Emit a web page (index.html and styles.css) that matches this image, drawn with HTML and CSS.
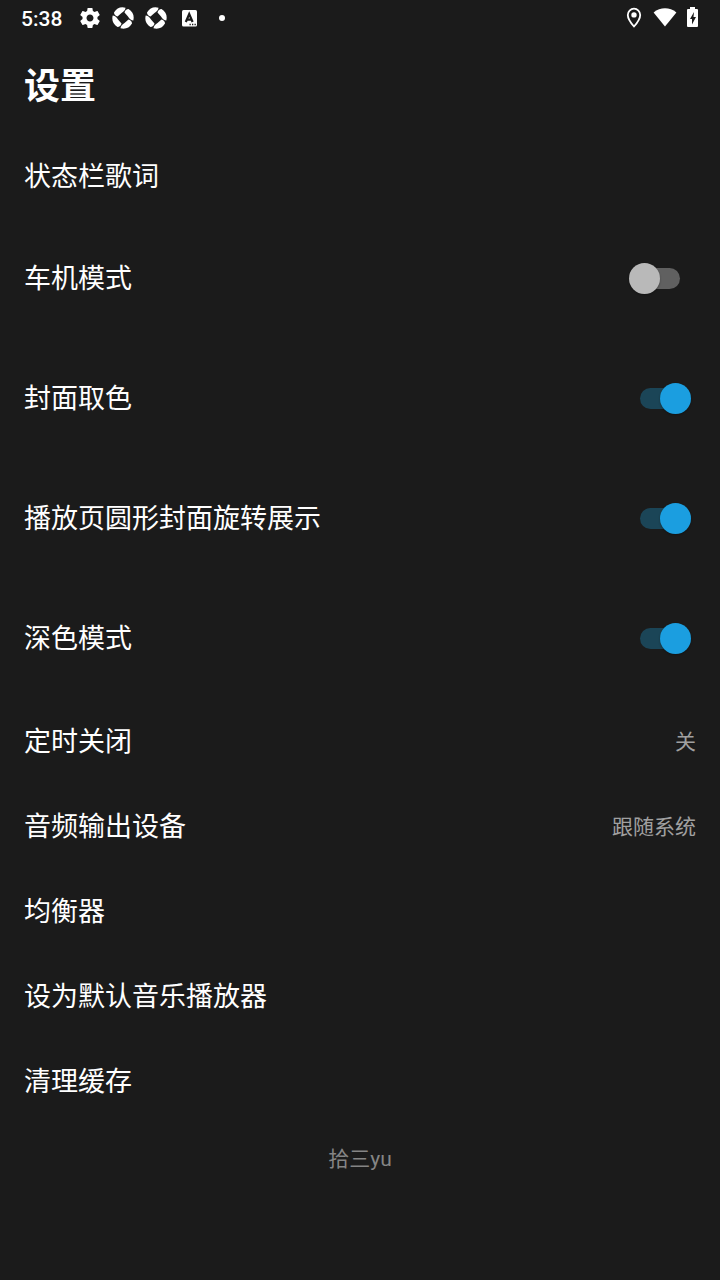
FILE: index.html
```html
<!DOCTYPE html>
<html lang="zh-CN">
<head>
  <meta charset="UTF-8">
  <meta name="viewport" content="width=device-width, initial-scale=1.0">
  <title>设置</title>
  <link rel="stylesheet" href="styles.css">
</head>
<body>

  <!-- Status bar -->
  <div class="status-bar">
    <span class="time">5:38</span>
    <div class="notifications">
      <svg width="24" height="24" viewBox="0 0 24 24" fill="#fff" aria-hidden="true">
        <path d="M19.43 12.98c.04-.32.07-.64.07-.98s-.03-.66-.07-.98l2.11-1.65c.19-.15.24-.42.12-.64l-2-3.46c-.12-.22-.39-.3-.61-.22l-2.49 1c-.52-.4-1.08-.73-1.69-.98l-.38-2.65C14.46 2.18 14.25 2 14 2h-4c-.25 0-.46.18-.49.42l-.38 2.65c-.61.25-1.17.59-1.69.98l-2.49-1c-.23-.09-.49 0-.61.22l-2 3.46c-.13.22-.07.49.12.64l2.11 1.65c-.04.32-.07.65-.07.98s.03.66.07.98l-2.11 1.65c-.19.15-.24.42-.12.64l2 3.46c.12.22.39.3.61.22l2.49-1c.52.4 1.08.73 1.69.98l.38 2.65c.03.24.24.42.49.42h4c.25 0 .46-.18.49-.42l.38-2.65c.61-.25 1.17-.59 1.69-.98l2.49 1c.23.09.49 0 .61-.22l2-3.46c.12-.22.07-.49-.12-.64l-2.11-1.65zM12 15.5c-1.93 0-3.5-1.57-3.5-3.5s1.57-3.5 3.5-3.5 3.5 1.57 3.5 3.5-1.57 3.5-3.5 3.5z"/>
      </svg>
      <svg width="24" height="24" viewBox="-12 -12 24 24" fill="#fff" aria-hidden="true">
        <g id="swirl">
          <path id="blade" d="M-9-5.500A10.600 10.600 0 0 1 2.500-10.300C2.500-8.500 1-6.500-1.500-5L-5.500-1.500C-7.500-2-9-3.500-9-5.500z"/>
          <use href="#blade" transform="rotate(90)"/>
          <use href="#blade" transform="rotate(180)"/>
          <use href="#blade" transform="rotate(270)"/>
        </g>
      </svg>
      <svg width="24" height="24" viewBox="-12 -12 24 24" fill="#fff" aria-hidden="true">
        <use href="#swirl"/>
      </svg>
      <svg width="24" height="24" viewBox="0 0 24 24" aria-hidden="true">
        <rect x="5" y="4" width="15" height="16.500" rx="1.500" fill="#fff"/>
        <path d="M8.800 16L12.200 8L15.600 16M10 13.600H14.500" fill="none" stroke="#1b1b1b" stroke-width="2.200"/>
        <path d="M12.500 18.500h1.300M15 18.500h1.300M17.500 18.500h1.300" stroke="#1b1b1b" stroke-width="1.300"/>
      </svg>
      <svg width="24" height="24" viewBox="0 0 24 24" fill="#fff" aria-hidden="true">
        <circle cx="12" cy="12" r="3"/>
      </svg>
    </div>
    <div class="system-icons">
      <svg width="24" height="24" viewBox="0 0 24 24" aria-hidden="true">
        <path d="M13 20.500C9.500 16.500 6.800 12.500 6.800 8.900a6.200 6.200 0 0 1 12.400 0C19.200 12.500 16.500 16.500 13 20.500z" fill="none" stroke="#fff" stroke-width="1.800"/>
        <circle cx="13" cy="8.900" r="2.700" fill="#fff"/>
      </svg>
      <svg width="24" height="24" viewBox="0 0 24 24" fill="#fff" aria-hidden="true">
        <path d="M12 20.500L.6 6.500C4 3.600 8 2.300 12 2.300s8 1.300 11.400 4.200z"/>
      </svg>
      <svg width="12" height="24" viewBox="0 0 12 24" aria-hidden="true">
        <path d="M3 1h5v2h2q1 0 1 1v16q0 1-1 1H1q-1 0-1-1V4q0-1 1-1h2z" fill="#fff"/>
        <path d="M7 6L3 13h2v5.500L9 11H6.500z" fill="#1b1b1b"/>
      </svg>
    </div>
  </div>

  <header>
    <h1>设置</h1>
  </header>

  <!-- Settings list -->
  <main>
    <button type="button" class="item">状态栏歌词</button>

    <div class="item switch-item">
      <label for="car-mode">车机模式</label>
      <input type="checkbox" role="switch" class="switch" id="car-mode">
    </div>
    <div class="item switch-item">
      <label for="cover-color">封面取色</label>
      <input type="checkbox" role="switch" class="switch" id="cover-color" checked>
    </div>
    <div class="item switch-item">
      <label for="cover-rotate">播放页圆形封面旋转展示</label>
      <input type="checkbox" role="switch" class="switch" id="cover-rotate" checked>
    </div>
    <div class="item switch-item">
      <label for="dark-mode">深色模式</label>
      <input type="checkbox" role="switch" class="switch" id="dark-mode" checked>
    </div>

    <button type="button" class="item">定时关闭 <span class="value">关</span></button>
    <button type="button" class="item">音频输出设备 <span class="value">跟随系统</span></button>
    <button type="button" class="item">均衡器</button>
    <button type="button" class="item">设为默认音乐播放器</button>
    <button type="button" class="item">清理缓存</button>
  </main>

  <footer>
    <p>拾三yu</p>
  </footer>

</body>
</html>
```
FILE: styles.css
```css
* {
  margin: 0;
  padding: 0;
  box-sizing: border-box;
}
body {
  font-family: Roboto, "Noto Sans CJK SC", sans-serif;
  background-color: #1b1b1b;
  color: white;
  min-height: 100vh;
}
svg {
  display: block;
}

/* Status bar */
.status-bar {
  display: flex;
  align-items: center;
  height: 36px;
  padding: 0 21px;
}
.time {
  font-size: 21px;
  font-weight: 500;
  line-height: 24px;
  padding-top: 2px;
}
.notifications {
  display: flex;
  gap: 9px;
  margin-left: 16px;
}
.system-icons {
  display: flex;
  gap: 8px;
  margin-left: auto;
}
.system-icons svg:nth-child(2) {
  margin-right: 2px;
}

header {
  padding: 25px 24px 20px;
}
h1 {
  font-size: 36px;
  font-weight: 700;
  line-height: 52px;
}

/* Settings list */
.item {
  display: flex;
  align-items: center;
  justify-content: space-between;
  width: 100%;
  height: 85px;
  padding: 0 24px 2px;
  background: none;
  border: none;
  color: white;
  font-family: inherit;
  font-size: 27px;
  text-align: left;
}
button.item {
  cursor: pointer;
}
.switch-item {
  height: 120px;
  padding-bottom: 0;
}
.switch-item label {
  padding-bottom: 4px;
}
.value {
  color: #a0a0a0;
  font-size: 21px;
}

/* Switch */
.switch {
  appearance: none;
  display: flex;
  align-items: center;
  width: 62px;
  height: 31px;
  margin-right: 5px;
  cursor: pointer;
}
.switch::before {
  content: "";
  width: 40px;
  height: 21px;
  margin-left: 11px;
  border-radius: 11px;
  background-color: #606060;
}
.switch::after {
  content: "";
  width: 31px;
  height: 31px;
  margin-left: -51px;
  border-radius: 50%;
  background-color: #b9b9b9;
  box-shadow: 0 1px 2px rgba(0, 0, 0, 0.3);
}
.switch:checked::before {
  background-color: #1b4557;
}
.switch:checked::after {
  margin-left: -20px;
  background-color: #1b9ee0;
}

footer {
  padding: 20px 24px;
  color: #858585;
  font-size: 21px;
  line-height: 32px;
  text-align: center;
}
```
